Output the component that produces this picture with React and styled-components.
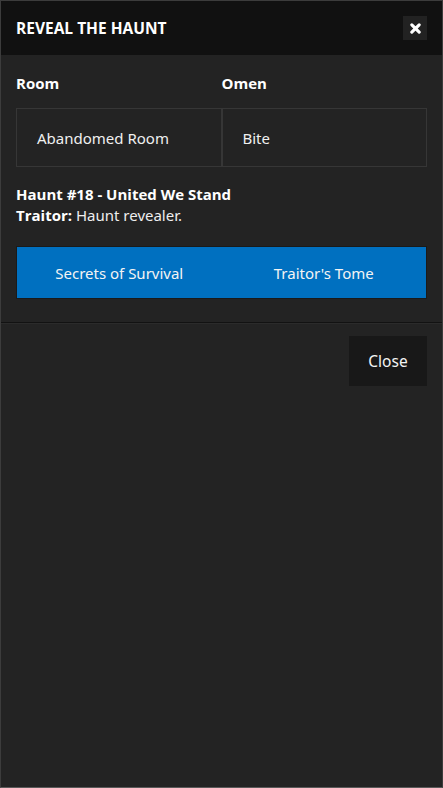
import React from "react";
import styled, { createGlobalStyle } from "styled-components";

const GlobalStyle = createGlobalStyle`
  html, body {
    margin: 0;
    padding: 0;
    background: #232323;
  }
  body {
    font-family: "Open Sans", "Noto Sans", sans-serif;
    color: #fff;
  }
  * {
    box-sizing: border-box;
  }
`;

const Modal = styled.div`
  width: 443px;
  height: 788px;
  border: 1px solid #3c3c3c;
  border-bottom-color: #5a5a5a;
  background: #232323;
  display: flex;
  flex-direction: column;
`;

const Header = styled.header`
  height: 54px;
  background: #111111;
  display: flex;
  align-items: center;
  justify-content: space-between;
  padding: 0 15px;
`;

const Title = styled.h1`
  margin: 0;
  font-size: 15.5px;
  font-weight: 700;
  color: #fff;
`;

const IconButton = styled.button`
  width: 24px;
  height: 24px;
  border: none;
  background: #222222;
  color: #fff;
  display: flex;
  align-items: center;
  justify-content: center;
  padding: 0;
  cursor: pointer;
`;

const Body = styled.section`
  padding: 18px 15px 23px;
  border-bottom: 1px solid #121212;
`;

const Labels = styled.div`
  display: grid;
  grid-template-columns: 1fr 1fr;
  margin-bottom: 15px;
`;

const Label = styled.div`
  font-weight: 700;
  font-size: 15px;
  line-height: 20px;
`;

const Table = styled.div`
  display: grid;
  grid-template-columns: 1fr 1fr;
  margin-bottom: 17px;
`;

const Cell = styled.div`
  height: 59px;
  border: 1px solid #363636;
  display: flex;
  align-items: center;
  padding-left: 20px;
  font-family: "Noto Sans", sans-serif;
  font-size: 15px;
  color: #f0f0f0;
`;

const Haunt = styled.div`
  font-size: 15px;
  line-height: 21px;
`;

const Strong = styled.span`
  font-weight: 700;
`;

const Light = styled.span`
  font-family: "Noto Sans", sans-serif;
  font-weight: 400;
  font-size: 15px;
  color: #eee;
`;

const BookBar = styled.div`
  margin-top: 20px;
  display: grid;
  grid-template-columns: 1fr 1fr;
  background: #0070c0;
  border: 1px solid #1a1a1a;
  height: 53px;
`;

const BookButton = styled.button`
  background: transparent;
  border: none;
  color: #f4f4f4;
  font-family: "Noto Sans", sans-serif;
  font-size: 15px;
  cursor: pointer;
`;

const Footer = styled.footer`
  display: flex;
  justify-content: flex-end;
  padding: 12px 15px;
  border-top: 1px solid #2b2b2b;
`;

const CloseButton = styled.button`
  width: 78px;
  height: 50px;
  border: none;
  background: #181818;
  color: #f4f4f4;
  font-family: "Noto Sans", sans-serif;
  font-size: 15.5px;
  cursor: pointer;
`;

const App = () => (
  <>
    <GlobalStyle />
    <Modal>
      <Header>
        <Title>REVEAL THE HAUNT</Title>
        <IconButton aria-label="close">
          <svg width="11" height="11" viewBox="0 0 12 12">
            <path
              d="M2 2 L10 10 M10 2 L2 10"
              stroke="#fff"
              strokeWidth="3.4"
              strokeLinecap="round"
            />
          </svg>
        </IconButton>
      </Header>
      <Body>
        <Labels>
          <Label>Room</Label>
          <Label>Omen</Label>
        </Labels>
        <Table>
          <Cell>Abandomed Room</Cell>
          <Cell>Bite</Cell>
        </Table>
        <Haunt>
          <Strong>Haunt #18 - United We Stand</Strong>
        </Haunt>
        <Haunt>
          <Strong>Traitor:</Strong> <Light>Haunt revealer.</Light>
        </Haunt>
        <BookBar>
          <BookButton>Secrets of Survival</BookButton>
          <BookButton>Traitor's Tome</BookButton>
        </BookBar>
      </Body>
      <Footer>
        <CloseButton>Close</CloseButton>
      </Footer>
    </Modal>
  </>
);

export default App;
